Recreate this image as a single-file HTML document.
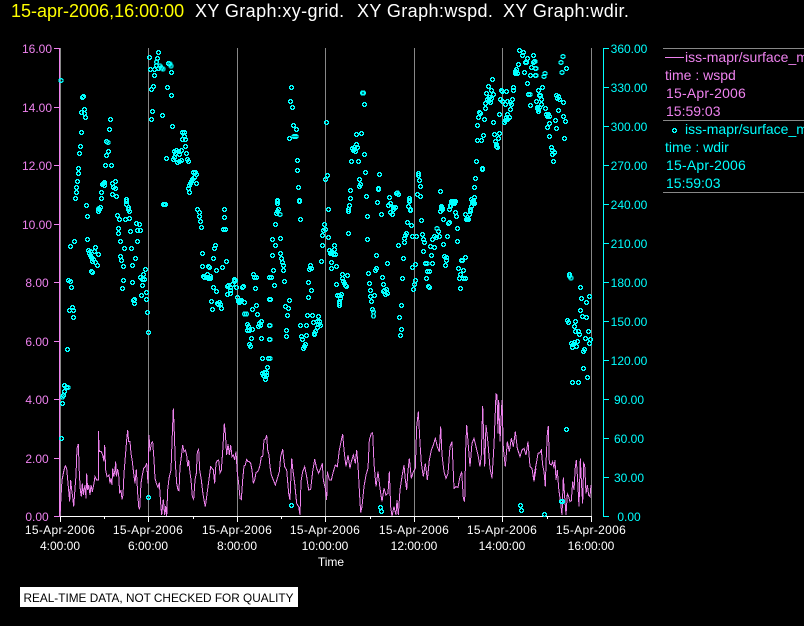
<!DOCTYPE html>
<html><head><meta charset="utf-8"><style>
html,body{margin:0;padding:0;background:#000;width:804px;height:626px;overflow:hidden}
svg{display:block;font-family:"Liberation Sans",sans-serif}
text{white-space:pre}
</style></head><body>
<svg xmlns="http://www.w3.org/2000/svg" width="804" height="626" viewBox="0 0 804 626">
<defs>
<marker id="m" markerUnits="userSpaceOnUse" markerWidth="30" markerHeight="30" refX="0" refY="0" orient="0" overflow="visible" viewBox="-15 -15 30 30">
<path fill="#0ff" shape-rendering="crispEdges" d="M-3-6h9v3h-9zM-6-3h6v3h-6zM3-3h6v3h-6zM-6 0h3v3h-3zM6 0h3v3h-3zM-6 3h6v3h-6zM3 3h6v3h-6zM-3 6h9v3h-9z"/>
</marker>
<style>.p{fill:none;stroke:none;marker-start:url(#m);marker-mid:url(#m);marker-end:url(#m)}.l{fill:none;stroke:#ee82ee;stroke-width:3;shape-rendering:crispEdges;stroke-linejoin:miter}</style>
</defs>
<rect width="804" height="626" fill="#000"/>
<!-- title -->
<g font-size="18">
<text x="11" y="17" fill="#ff0">15-apr-2006,16:00:00</text>
<text x="195" y="17" fill="#fff" letter-spacing=".4">XY Graph:xy-grid.</text>
<text x="357" y="17" fill="#fff" letter-spacing=".4">XY Graph:wspd.</text>
<text x="503" y="17" fill="#fff" letter-spacing=".4">XY Graph:wdir.</text>
</g>
<!-- grid -->
<path shape-rendering="crispEdges" stroke="#888" fill="none" d="M60.5 48V516M148.5 48V516M237.5 48V516M325.5 48V516M414.5 48V516M502.5 48V516M591.5 48V516"/>
<!-- wspd line -->
<g transform="translate(0,400) scale(.3333333333)"><polyline class="l" points="180,349 183,290 186,240 192,210 196,198 200,205 205,260 209,305 212,240 215,270 218,290 221,320 224,280 228,225 231,145 235,132 238,220 241,270 244,290 247,250 250,285 255,255 258,295 260,220 263,270 266,255 270,285 273,255 277,275 281,255 285,230 290,240 295,240 295,93 298,155 304,155 308,165 312,185 314,135 317,210 321,230 327,225 330,250 333,235 336,255 338,205 341,230 345,210 347,185 349,230 353,208 356,225 359,280 363,270 366,298 369,285 372,220 376,170 380,120 383,90 386,125 390,125 393,160 397,185 401,220 405,250 409,208 413,280 416,320 419,328 423,250 427,225 431,205 436,200 440,190 444,250 447,105 450,155 454,130 458,125 462,180 465,235 469,250 474,262 478,248 482,310 485,345 488,316 490,298 494,345 497,318 500,349 503,270 507,235 513,210 517,100 520,25 523,100 526,190 530,250 534,270 537,272 540,200 544,170 548,135 552,155 556,150 560,165 563,200 566,180 569,210 573,240 577,290 581,298 585,240 589,220 592,155 596,148 599,210 604,240 608,275 612,300 616,320 620,290 624,260 628,230 632,200 636,205 640,210 644,250 648,190 652,182 656,180 660,218 664,210 668,155 673,70 676,100 680,165 684,132 688,165 692,135 696,170 700,165 704,180 708,155 712,220 716,250 720,295 724,298 728,240 732,198 736,195 740,178 744,185 748,185 752,190 756,210 760,250 764,240 768,218 772,215 776,210 780,195 784,170 788,170 792,120 796,118 800,105 803,150 807,165 810,200"/></g>
<g transform="translate(270,400) scale(.3333333333)"><polyline class="l" points="0,200 4,225 10,240 16,255 22,235 28,215 32,170 38,148 44,200 50,210 56,280 60,300 65,175 68,205 74,250 80,310 86,320 90,345 93,245 98,215 104,200 110,230 116,270 122,268 128,215 134,178 140,205 146,220 152,205 157,190 160,240 166,265 170,300 172,215 178,240 184,240 190,215 196,195 202,200 208,150 214,120 218,102 222,150 228,200 234,165 240,205 244,185 250,165 256,190 260,150 264,195 268,270 272,338 276,320 282,260 288,225 294,205 298,120 304,100 308,98 312,190 318,260 324,215 330,265 336,305 342,265 348,285 354,280 358,215 362,320 366,348 372,320 378,345 381,300 385,345 390,270 396,230 402,195 406,240 410,270 414,210 418,175 424,235 430,215 436,205 440,80 445,35 450,130 454,190 460,230 466,190 472,240 478,180 484,150 490,135 496,115 502,140 508,155 512,80 516,165 522,215 528,235 534,220 540,140 546,125 552,265 558,260 564,262 570,230 575,215 580,295 584,305 587,150 590,75 596,150 600,200 606,130 612,115 618,140 624,165 630,200 634,165 638,18 644,200 648,75 654,130 660,205 666,235 672,135 678,-18 681,-15 684,100 686,0 690,125 696,0 700,145 706,200 712,125 718,155 724,115 730,140 736,95 742,145 750,170 756,150 762,145 768,165 774,125 780,200 786,205 792,245 798,205"/></g>
<g transform="translate(534,400) scale(.3333333333)"><polyline class="l" points="0,232 4,205 8,185 12,160 18,158 22,150 26,195 30,215 34,260 36,190 40,100 43,78 46,190 52,195 56,185 60,205 63,180 66,240 70,210 74,265 80,310 84,345 88,232 92,290 96,345 100,282 104,290 108,305 112,302 116,245 120,270 124,200 127,180 131,240 135,320 139,175 143,260 146,310 149,190 152,195 156,280 160,255 164,285 168,290 171,255"/></g>
<!-- axes -->
<path shape-rendering="crispEdges" fill="none" stroke="#ee82ee" d="M59.5 48V516M54 48.5H60M54 107.5H60M54 165.5H60M54 224.5H60M54 282.5H60M54 341.5H60M54 399.5H60M54 458.5H60M54 516.5H60"/>
<path shape-rendering="crispEdges" fill="none" stroke="#0ff" d="M603.5 48V517M603 48.5H609M603 87.5H609M603 126.5H609M603 165.5H609M603 204.5H609M603 243.5H609M603 282.5H609M603 321.5H609M603 360.5H609M603 399.5H609M603 438.5H609M603 477.5H609M603 516.5H609"/>
<path shape-rendering="crispEdges" fill="none" stroke="#fff" d="M60 516.5H592M60.5 516V522M148.5 516V522M237.5 516V522M325.5 516V522M414.5 516V522M502.5 516V522M591.5 516V522M104.5 516V519M193.5 516V519M281.5 516V519M370.5 516V519M458.5 516V519M547.5 516V519"/>
<!-- points -->
<g transform="translate(-.3333333333,-.3333333333) scale(.3333333333)"><polyline class="p" points="182,241 475,157 448,172 472,175 469,186 451,208 463,208 469,196 475,205 480,197 484,203 488,206 463,226 505,190 510,192 512,197 514,217 460,259 454,268 502,262 514,286 457,334 454,358 487,346 517,379 250,289 247,292 253,328 244,337 253,340 256,352 244,397 241,439 238,460 235,505 235,520 232,544 229,562 229,577 226,595 259,616 331,358 328,388 319,424 323,427 325,454 319,466 316,496 334,496 313,547 310,550 307,553 313,556 337,550 346,544 340,562 346,565 304,577 304,595 337,583 349,589 379,598 379,613 385,628 301,622 295,627 547,397 553,397 553,409 547,418 556,418 556,439 559,460 562,478 565,484 499,475 523,454 529,451 535,454 544,451 538,463 523,472 520,478 532,487 538,484 544,481 526,460 580,517 586,517 589,523 583,532 577,538 574,544 571,550 568,556 589,550 565,565 568,577 490,613 493,613 496,613 592,628 673,628"/></g>
<g transform="translate(269.6666666667,-.3333333333) scale(.3333333333)"><polyline class="p" points="64,262 61,304 67,322 70,376 79,388 58,415 72,409 77,409 82,481 82,511 85,562 88,601 22,601 22,610 25,628 169,367 172,526 166,538 175,628 277,278 280,278 283,313 259,403 274,400 259,433 247,445 253,442 262,442 250,451 256,454 283,463 244,484 265,484 286,517 328,523 268,538 271,553 268,559 241,571 241,595 289,589 238,616 235,628 325,565 325,568 322,607 358,592 355,616 361,610 370,622 376,622 382,578 379,580 385,583 418,595 418,601 415,619 421,628 445,520 445,526 448,541 451,559 442,583 451,589 511,574 514,622 517,625 538,628 541,619 544,604 550,604 556,604 547,610 553,610 613,592 604,598 610,601 607,607 613,610 604,619 601,628 619,484 637,505 637,508 616,535 613,562 622,376 625,352 628,337 631,340 643,358 646,325 646,310 649,280 655,259 667,238 664,271 670,283 658,292 664,295 652,298 655,304 661,307 670,367 640,406 622,421 634,421 673,403 688,400 685,415 676,424 679,433 679,439 682,442 688,343 694,271 697,274 709,274 691,298 697,304 706,313 712,304 721,307 727,298 724,313 721,328 712,343 709,352 718,352 712,358 703,367 706,361 730,262 730,271 748,151 760,157 757,166 772,175 790,166 769,187 766,187 793,184 790,187 745,193 784,202 796,205 739,208 736,214 742,220 736,220 763,217 781,226 796,226 772,250 775,283 779,283 805,271 808,286 799,304 781,316 802,325 808,322 805,334"/></g>
<g transform="translate(533.6666666667,-.3333333333) scale(.3333333333)"><polyline class="p" points="-2,166 2,184 5,205 5,226 32,220 29,229 86,169 80,187 97,205 83,217 25,262 13,271 19,286 22,298 7,304 22,313 16,322 10,322 13,328 13,334 34,325 73,331 67,286 73,289 70,295 76,298 88,307 37,343 43,343 40,349 46,349 88,349 64,361 94,364 46,370 40,382 67,385 46,409 91,415 52,442 55,451 61,457 55,463 58,484"/><polyline class="p" points="421,391 421,391"/></g>
<g transform="translate(-.3333333333,199.6666666667) scale(.3333333333)"><polyline class="p" points="187,610 187,590 190,586 193,574 193,556 199,562 203,562 202,448 220,352 208,331 220,331 217,322 214,262 211,244 205,241 223,124 211,139 259,16 262,49 262,118 295,34 298,28 301,22 295,163 286,142 283,154 265,151 271,154 268,160 271,166 274,172 280,178 277,184 286,187 292,196 274,214 277,217 352,46 358,58 376,58 388,55 355,85 355,100 361,124 391,94 373,145 394,145 361,169 364,181 370,199 406,175 397,196 370,241 397,247 367,265 409,70 418,73 421,91 412,91 412,124 379,4 379,13 385,22 388,34 436,208 430,223 421,232 427,238 433,238 427,256 439,277 424,286 439,298 403,298 400,301 403,310 442,337 445,397 490,13 493,13 496,13 592,28 598,37 598,49 601,64 604,82 673,28 673,52 670,88 676,88 646,136 643,145 607,160 640,175 679,184 607,199 625,199 628,202 667,202 649,211 622,223 610,229 613,232 619,232 625,235 631,229 631,235 640,262 649,274 634,304 637,328 652,310 658,307 655,313 661,313 664,325 685,256 682,259 697,253 691,262 709,262 691,271 682,283 691,280 703,238 706,241 703,244 727,262 730,259 712,292 715,304 721,304 724,301 718,307 733,307 769,316 757,328 772,343 733,341 739,341 760,223 763,232 769,232 766,265 808,232 808,298 742,373 745,379 748,391 742,391 757,388 754,415 784,364 778,370 775,379 781,376 808,376 784,415 808,418 748,433 751,439 787,475 805,475 802,502 793,517 787,520 799,517 790,526 799,526 793,529 796,538"/></g>
<g transform="translate(269.6666666667,199.6666666667) scale(.3333333333)"><polyline class="p" points="22,4 22,10 22,34 19,40 29,43 16,73 7,118 31,115 16,136 7,166 31,160 34,175 37,187 40,196 40,211 10,211 4,232 43,244 13,256 1,298 58,301 46,319 55,325 52,346 0,376 0,418 88,4 91,58 175,28 163,73 166,88 160,91 157,106 175,112 157,136 193,136 178,151 193,148 184,157 190,163 196,163 181,160 154,184 184,187 199,199 184,205 121,196 118,208 124,205 115,247 124,271 115,292 217,223 232,226 217,235 220,244 223,250 226,256 229,259 199,253 202,286 208,286 214,283 211,295 208,304 208,310 208,316 238,16 235,34 235,100 292,49 292,118 322,7 334,43 355,16 361,10 376,22 370,28 361,37 367,43 319,166 352,190 316,211 319,205 295,220 337,232 298,250 340,253 301,271 349,268 343,271 340,274 346,283 352,280 313,286 301,289 304,304 307,328 310,335 310,347 112,346 127,346 145,349 130,367 142,364 148,364 145,373 151,376 142,382 136,394 91,376 109,376 133,400 133,403 109,406 94,409 97,418 49,391 49,409 106,433 103,439 100,445 418,4 415,19 421,31 412,67 424,76 454,61 409,100 406,106 403,115 403,127 385,136 400,175 427,109 439,109 457,103 460,118 463,127 460,154 436,193 427,202 397,235 436,241 433,253 430,268 394,316 388,352 394,388 391,406 481,139 493,142 484,166 466,190 470,190 487,190 472,214 478,214 469,235 475,259 478,262 514,19 511,34 517,28 520,58 538,28 541,16 547,7 553,7 556,37 559,49 535,70 538,67 562,85 500,85 505,94 493,109 487,118 499,112 508,109 532,109 562,124 520,133 523,169 529,172 529,181 526,196 586,172 574,181 577,181 565,205 580,211 571,223 568,235 580,235 586,235 571,265 586,43 604,19 610,10 601,34 598,43 592,52 592,58 595,58 589,58 607,4 0,475"/></g>
<g transform="translate(533.6666666667,199.6666666667) scale(.3333333333)"><polyline class="p" points="106,223 106,227 110,233 139,262 142,295 166,289 157,307 139,331 145,349 157,352 124,364 100,361 103,367 121,379 124,394 133,394 136,403 163,394 154,415 169,418 166,430 130,424 121,427 112,430 127,439 115,442 118,433 151,448 148,454 148,505 160,532 115,547 133,547"/></g>
<g transform="translate(-.3333333333,399.6666666667) scale(.3333333333)"><polyline class="p" points="187,10 184,115 445,292"/></g>
<g transform="translate(269.6666666667,399.6666666667) scale(.3333333333)"><polyline class="p" points="64,316 331,322 334,334 751,316 754,331"/></g>
<g transform="translate(533.6666666667,399.6666666667) scale(.3333333333)"><polyline class="p" points="97,88 82,304 85,304 31,343"/></g>
<!-- left labels -->
<g font-size="12" fill="#ee82ee" text-anchor="middle">
<text x="37" y="53">16.00</text><text x="37" y="112">14.00</text><text x="37" y="170">12.00</text><text x="37" y="229">10.00</text><text x="37" y="287">8.00</text><text x="37" y="346">6.00</text><text x="37" y="404">4.00</text><text x="37" y="463">2.00</text><text x="37" y="521">0.00</text>
</g>
<!-- right labels -->
<g font-size="12" fill="#0ff" text-anchor="middle">
<text x="629" y="53">360.00</text><text x="629" y="92">330.00</text><text x="629" y="131">300.00</text><text x="629" y="170">270.00</text><text x="629" y="209">240.00</text><text x="629" y="248">210.00</text><text x="629" y="287">180.00</text><text x="629" y="326">150.00</text><text x="629" y="365">120.00</text><text x="629" y="404">90.00</text><text x="629" y="443">60.00</text><text x="629" y="482">30.00</text><text x="629" y="521">0.00</text>
</g>
<!-- bottom labels -->
<g font-size="12" fill="#fff" text-anchor="middle">
<g letter-spacing=".33">
<text x="60" y="534">15-Apr-2006</text><text x="148" y="534">15-Apr-2006</text><text x="237" y="534">15-Apr-2006</text><text x="325" y="534">15-Apr-2006</text><text x="414" y="534">15-Apr-2006</text><text x="502" y="534">15-Apr-2006</text><text x="591" y="534">15-Apr-2006</text>
</g>
<text x="60" y="550">4:00:00</text><text x="148" y="550">6:00:00</text><text x="237" y="550">8:00:00</text><text x="325" y="550">10:00:00</text><text x="414" y="550">12:00:00</text><text x="502" y="550">14:00:00</text><text x="591" y="550">16:00:00</text>
<text x="331" y="566">Time</text>
</g>
<!-- legend -->
<path shape-rendering="crispEdges" fill="none" stroke="#888" d="M663 48.5H804M663 120.5H804M663 192.5H804"/>
<path shape-rendering="crispEdges" fill="none" stroke="#ee82ee" d="M665 57.5H684"/>
<g font-size="14" fill="#ee82ee">
<text x="685" y="62">iss-mapr/surface_met</text>
<text x="665" y="80">time : wspd</text>
<text x="666" y="98" letter-spacing=".2">15-Apr-2006</text>
<text x="666" y="116">15:59:03</text>
</g>
<g font-size="14" fill="#0ff">
<text x="685" y="134">iss-mapr/surface_met</text>
<text x="665" y="152">time : wdir</text>
<text x="666" y="170" letter-spacing=".2">15-Apr-2006</text>
<text x="666" y="188">15:59:03</text>
</g>
<!-- banner -->
<rect x="20" y="587" width="278" height="20" fill="#fff"/>
<text x="23.5" y="602" font-size="12" fill="#000" textLength="270" lengthAdjust="spacingAndGlyphs">REAL-TIME DATA, NOT CHECKED FOR QUALITY</text>
</svg>
</body></html>
